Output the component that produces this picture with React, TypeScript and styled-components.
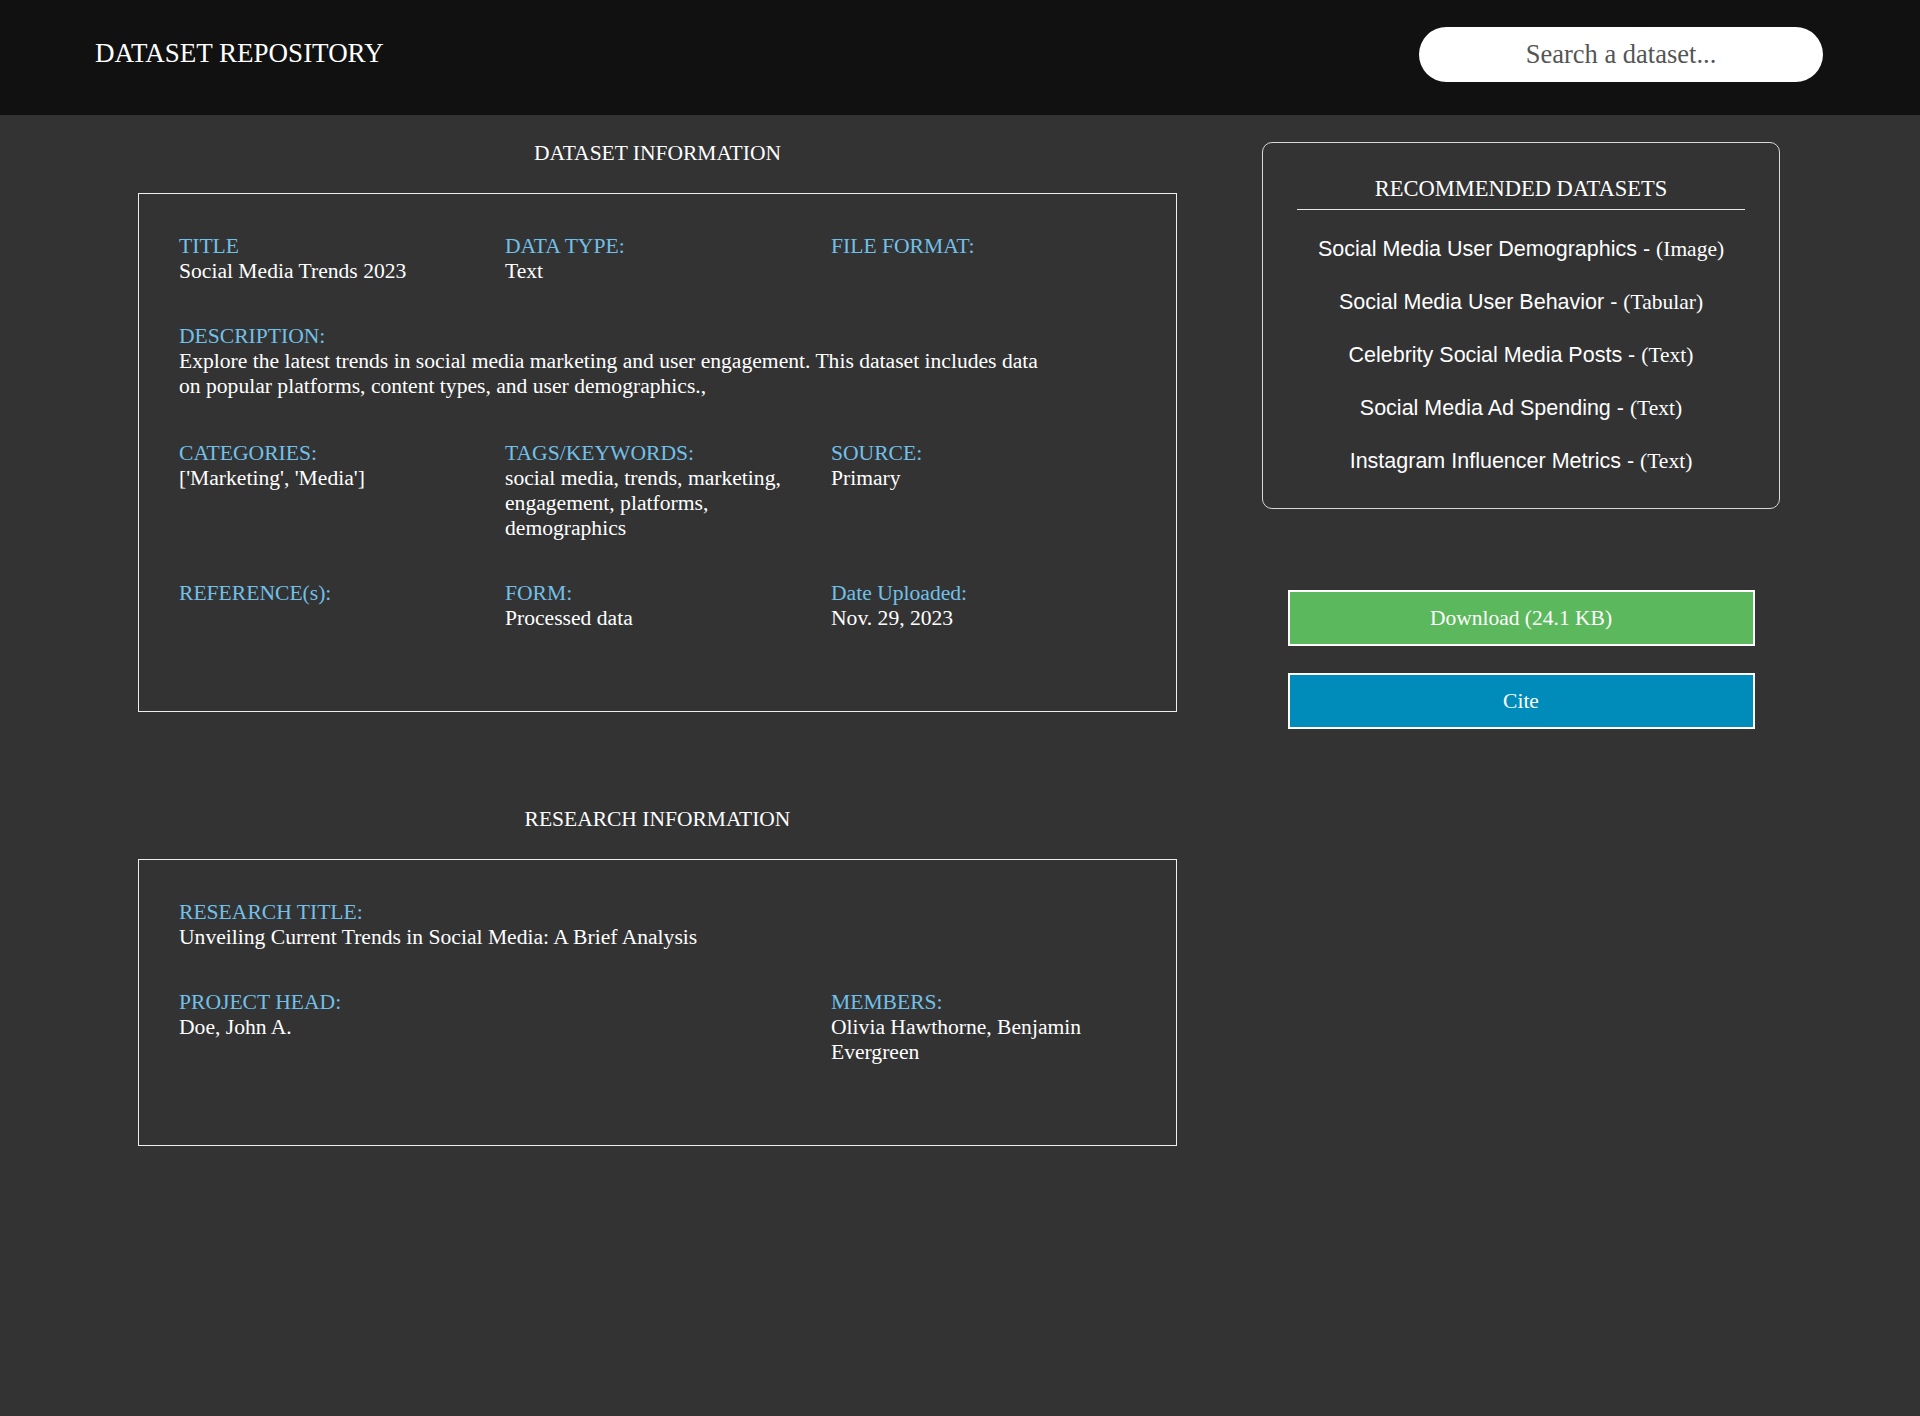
import React from "react";
import styled, { createGlobalStyle } from "styled-components";

const GlobalStyle = createGlobalStyle`
  html, body {
    margin: 0;
    padding: 0;
    background: #333333;
    min-height: 1416px;
  }
  body {
    font-family: "Liberation Serif", "Times New Roman", serif;
    color: #ffffff;
  }
  * { box-sizing: border-box; }
`;

const Header = styled.header`
  height: 115px;
  background: #111111;
  display: flex;
  align-items: center;
  justify-content: space-between;
  padding: 0 97px 0 95px;
`;

const Brand = styled.h1`
  margin: 0 0 8px 0;
  font-size: 27px;
  font-weight: normal;
  color: #ffffff;
`;

const Search = styled.input`
  width: 404px;
  height: 55px;
  margin-bottom: 6px;
  border: none;
  border-radius: 28px;
  background: #ffffff;
  font-family: "Liberation Serif", "Times New Roman", serif;
  font-size: 26.5px;
  text-align: center;
  color: #222;
  outline: none;
  &::placeholder {
    color: #555555;
  }
`;

const Main = styled.main`
  display: flex;
  align-items: flex-start;
  gap: 85px;
  padding: 26px 0 0 138px;
`;

const LeftColumn = styled.div`
  width: 1039px;
  display: flex;
  flex-direction: column;
`;

const Section = styled.section<{ $spaced?: boolean }>`
  margin-top: ${(p) => (p.$spaced ? "95px" : "0")};
`;

const SectionTitle = styled.h2`
  margin: 0 0 27px 0;
  font-size: 21.5px;
  font-weight: normal;
  text-align: center;
  color: #ffffff;
`;

const InfoBox = styled.div`
  border: 1px solid #eeeeee;
  padding: 40px 40px 40px 40px;
`;

const Row = styled.div`
  display: grid;
  grid-template-columns: 326px 326px 1fr;
  margin-bottom: 40px;
`;

const Field = styled.div<{ $wide?: boolean; $col?: number }>`
  grid-column: ${(p) => (p.$wide ? "1 / -1" : p.$col ? `${p.$col}` : "auto")};
  max-width: ${(p) => (p.$wide ? "875px" : "none")};
  font-size: 21.6px;
`;

const Label = styled.div`
  color: #72c0e8;
`;

const Value = styled.div<{ $extra?: boolean }>`
  color: #ffffff;
  margin-bottom: ${(p) => (p.$extra ? "2px" : "0")};
`;

const RightColumn = styled.aside`
  width: 518px;
  margin-top: 1px;
  display: flex;
  flex-direction: column;
  align-items: center;
`;

const RecBox = styled.div`
  width: 100%;
  border: 1px solid #d8d8d8;
  border-radius: 10px;
  padding: 33px 34px 34px;
`;

const RecTitle = styled.h2`
  margin: 0;
  padding-bottom: 7px;
  border-bottom: 1px solid #e6e6e6;
  font-size: 22.5px;
  font-weight: normal;
  text-align: center;
  color: #ffffff;
`;

const RecList = styled.ul`
  list-style: none;
  margin: 27px 0 0 0;
  padding: 0;
  display: flex;
  flex-direction: column;
  gap: 28px;
`;

const RecItem = styled.li`
  text-align: center;
  font-size: 21.5px;
  color: #ffffff;
`;

const RecName = styled.span`
  font-family: "Liberation Sans", Arial, sans-serif;
`;

const RecType = styled.span`
  font-family: "Liberation Serif", "Times New Roman", serif;
`;

const ActionButton = styled.button<{ $variant: "download" | "cite" }>`
  width: 467px;
  height: 56px;
  margin-top: ${(p) => (p.$variant === "download" ? "81px" : "27px")};
  border: 2px solid #ffffff;
  background: ${(p) => (p.$variant === "download" ? "#5cb85c" : "#008cba")};
  color: #ffffff;
  font-family: "Liberation Serif", "Times New Roman", serif;
  font-size: 21.5px;
  cursor: pointer;
`;

type FieldData = { label: string; value?: string[]; wide?: boolean; col?: number; extra?: boolean };

const datasetRows: FieldData[][] = [
  [
    { label: "TITLE", value: ["Social Media Trends 2023"] },
    { label: "DATA TYPE:", value: ["Text"] },
    { label: "FILE FORMAT:" },
  ],
  [
    {
      label: "DESCRIPTION:",
      value: [
        "Explore the latest trends in social media marketing and user engagement. This dataset includes data on popular platforms, content types, and user demographics.,",
      ],
      wide: true,
      extra: true,
    },
  ],
  [
    { label: "CATEGORIES:", value: ["['Marketing', 'Media']"] },
    { label: "TAGS/KEYWORDS:", value: ["social media, trends, marketing, engagement, platforms, demographics"] },
    { label: "SOURCE:", value: ["Primary"] },
  ],
  [
    { label: "REFERENCE(s):" },
    { label: "FORM:", value: ["Processed data"] },
    { label: "Date Uploaded:", value: ["Nov. 29, 2023"] },
  ],
];

const researchRows: FieldData[][] = [
  [
    {
      label: "RESEARCH TITLE:",
      value: ["Unveiling Current Trends in Social Media: A Brief Analysis"],
      wide: true,
    },
  ],
  [
    { label: "PROJECT HEAD:", value: ["Doe, John A."] },
    { label: "MEMBERS:", value: ["Olivia Hawthorne, Benjamin Evergreen"], col: 3 },
  ],
];

const recommended = [
  { name: "Social Media User Demographics", type: "Image" },
  { name: "Social Media User Behavior", type: "Tabular" },
  { name: "Celebrity Social Media Posts", type: "Text" },
  { name: "Social Media Ad Spending", type: "Text" },
  { name: "Instagram Influencer Metrics", type: "Text" },
];

const InfoRows: React.FC<{ rows: FieldData[][] }> = ({ rows }) => (
  <>
    {rows.map((row, i) => (
      <Row key={i}>
        {row.map((f) => (
          <Field key={f.label} $wide={f.wide} $col={f.col}>
            <Label>{f.label}</Label>
            {f.value?.map((v) => (
              <Value key={v} $extra={f.extra}>
                {v}
              </Value>
            ))}
          </Field>
        ))}
      </Row>
    ))}
  </>
);

export default function App() {
  return (
    <>
      <GlobalStyle />
      <Header>
        <Brand>DATASET REPOSITORY</Brand>
        <Search type="text" placeholder="Search a dataset..." />
      </Header>
      <Main>
        <LeftColumn>
          <Section>
            <SectionTitle>DATASET INFORMATION</SectionTitle>
            <InfoBox>
              <InfoRows rows={datasetRows} />
            </InfoBox>
          </Section>
          <Section $spaced>
            <SectionTitle>RESEARCH INFORMATION</SectionTitle>
            <InfoBox>
              <InfoRows rows={researchRows} />
            </InfoBox>
          </Section>
        </LeftColumn>
        <RightColumn>
          <RecBox>
            <RecTitle>RECOMMENDED DATASETS</RecTitle>
            <RecList>
              {recommended.map((r) => (
                <RecItem key={r.name}>
                  <RecName>{r.name} - </RecName>
                  <RecType>({r.type})</RecType>
                </RecItem>
              ))}
            </RecList>
          </RecBox>
          <ActionButton $variant="download">Download (24.1 KB)</ActionButton>
          <ActionButton $variant="cite">Cite</ActionButton>
        </RightColumn>
      </Main>
    </>
  );
}
